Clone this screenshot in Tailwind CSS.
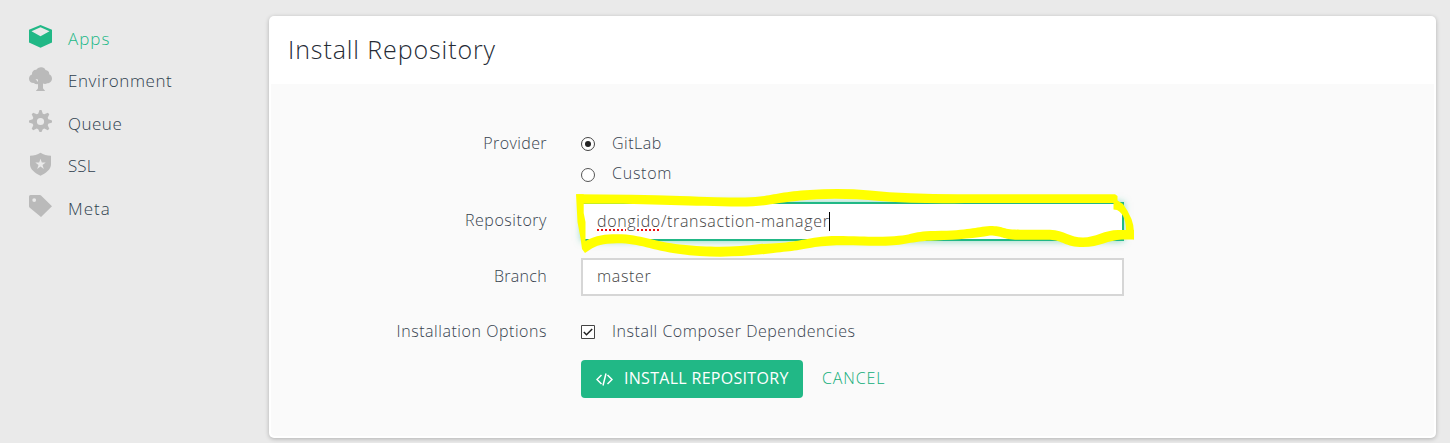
<!DOCTYPE html>
<html lang="en">
<head>
<meta charset="utf-8">
<title>Install Repository</title>
<script src="https://cdn.jsdelivr.net/npm/@tailwindcss/browser@4"></script>
</head>
<body class="h-[443px] overflow-hidden bg-[#eaeaea] font-['Open_Sans',sans-serif] font-light text-[#36424e]">
<div class="flex h-full">
  <nav class="flex w-[269px] shrink-0 flex-col pl-7 pt-[17.5px] text-[17px] text-[#2f3f4e]">
    <a class="flex h-[42.4px] items-center gap-4 text-[#21b886]">
      <svg class="mb-1 size-6" viewBox="0 0 24 24" fill="currentColor" fill-rule="evenodd"><path d="M12.500 0 24 4.700V17.500l-11.500 5.300L1 17.500V4.700zM12.500 2.300 3.500 6.300l9 5 9-5z"/></svg>
      <span class="tracking-[1px]">Apps</span>
    </a>
    <a class="flex h-[42.4px] items-center gap-4">
      <svg class="mb-1 size-6 text-[#bababa]" viewBox="0 0 24 24" fill="currentColor" fill-rule="evenodd"><path d="M12 .5c2.300-.8 4.700.2 5.500 2.400 2.500.2 4 2.100 3.700 4.300 1.800.9 2.800 2.500 2.800 4.300 0 2.900-2.200 4.800-4.800 4.800-1 .8-2.700.9-4.200.3v4.600c.6 1.300 1.800 1.500 2 2.800H8c.2-1.300 1.700-1.500 2-2.800v-4.100c-1.500.4-3.200.1-4-1-2.900.1-5-1.600-5-4.400C1 9.600 2.200 8 4 7.500c-.3-3 1.700-5 4.300-4.800C9 1.500 10.500.4 12 .5zM7.500 12l2.500 3v-2.500z"/></svg>
      <span class="tracking-[0.6px]">Environment</span>
    </a>
    <a class="flex h-[42.4px] items-center gap-4">
      <svg class="mb-1 size-6 text-[#bababa]" viewBox="0 0 24 24" fill="currentColor" fill-rule="evenodd"><path d="M11.500 1h2l1.300 3.700 1.500.6 3.500-1.600 1.500 1.500-1.600 3.500.6 1.500L24 11.500v2l-3.700 1.300-.6 1.500 1.600 3.400-1.500 1.500-3.500-1.600-1.500.6L13.500 23h-2l-1.300-2.800-1.500-.6-3.500 1.600-1.500-1.500 1.600-3.400-.6-1.500L1 13.500v-2l3.700-1.300.6-1.500-1.600-3.500 1.500-1.500 3.500 1.600 1.500-.6zM12.500 8.900a3.600 3.600 0 1 0 0 7.200 3.600 3.600 0 0 0 0-7.200z"/></svg>
      <span class="tracking-[0.5px]">Queue</span>
    </a>
    <a class="flex h-[42.4px] items-center gap-4">
      <svg class="mb-1 size-6 text-[#bababa]" viewBox="0 0 24 24" fill="currentColor" fill-rule="evenodd"><path d="M12.500.700C15.500 2.800 19 3.500 23 3.700v8.800c0 5.200-5.500 8.700-10.500 11.200C7.500 21.200 2 17.700 2 12.500V3.700C6 3.500 9.500 2.800 12.500.700zM12.500 6.700l-1.300 3.900H7.300l3.200 2.400-1.300 4 3.300-2.500 3.300 2.500-1.300-4 3.200-2.400h-3.900z"/></svg>
      <span class="tracking-[0.1px]">SSL</span>
    </a>
    <a class="flex h-[42.4px] items-center gap-4">
      <svg class="mb-1 size-6 text-[#bababa]" viewBox="0 0 24 24" fill="currentColor" fill-rule="evenodd"><path d="M2.500 1H12l1 .4L24 12.300 13 23 1.500 13.500 1 12.500v-10A1.500 1.500 0 0 1 2.500 1zM6.200 4.200a1.900 1.900 0 1 0 0 3.800 1.900 1.900 0 0 0 0-3.800z"/></svg>
      <span class="tracking-[1px]">Meta</span>
    </a>
  </nav>

  <main class="mt-4 h-[422px] w-[1167px] rounded-[5px] bg-white px-0.5 pb-0.5 shadow-[0_1px_4px_rgba(0,0,0,0.25)]">
    <h1 class="flex h-[68px] items-center px-[17px] text-[25px] tracking-[0.9px] text-[#252b35]">Install Repository</h1>
    <form class="relative h-[352px] rounded-b bg-[#fafafa] pt-[44px] text-[16px]">
      <div class="flex h-[30px] items-center">
        <span class="w-[276px] text-right tracking-[0.4px]">Provider</span>
        <span class="ml-[34px] mt-0.5 flex size-3.5 items-center justify-center rounded-full border-[1.500px] border-[#444] bg-white"><i class="size-1.5 rounded-full bg-[#222]"></i></span>
        <span class="ml-[17px] tracking-[0.5px]">GitLab</span>
      </div>
      <div class="flex h-[30px] items-center">
        <span class="ml-[310px] mt-[3px] size-3.5 rounded-full border-[1.500px] border-[#555] bg-white"></span>
        <span class="ml-[17px] tracking-[0.75px]">Custom</span>
      </div>
      <div class="mt-[14px] flex h-[39px] items-center">
        <span class="w-[276px] pb-[3px] text-right tracking-[0.55px]">Repository</span>
        <div class="ml-[34px] flex h-[39px] w-[543px] items-center border-2 border-[#21b886] bg-white pl-[14px] text-[#444] shadow-[0_0_7px_rgba(33,184,134,0.55)]">
          <span class="pb-px tracking-[0.67px]"><span class="underline decoration-[#e11] decoration-dotted decoration-2 underline-offset-2">dongido</span>/transaction-manager</span><i class="-ml-px h-[19px] w-px bg-black"></i>
        </div>
      </div>
      <div class="mt-[17px] flex h-[38px] items-center">
        <span class="w-[276px] pb-0.5 text-right tracking-[0.3px]">Branch</span>
        <div class="ml-[34px] flex h-[38px] w-[543px] items-center border-2 border-[#d6d6d6] bg-white pb-0.5 pl-[14px] tracking-[0.65px] text-[#444]">master</div>
      </div>
      <div class="mt-[20px] flex h-[30px] items-center">
        <span class="w-[276px] text-right tracking-[0.55px]">Installation Options</span>
        <svg class="ml-[34px] mt-0.5 size-3.5" viewBox="0 0 14 14" fill="none"><path d="M.5.500h13v13H.500z" fill="#fff" stroke="#444"/><path d="m2.800 7 2.700 2.700 5.700-5.700" stroke="#222" stroke-width="1.500"/></svg>
        <span class="ml-[17px] tracking-[0.53px]">Install Composer Dependencies</span>
      </div>
      <div class="mt-[14px] flex h-[38px] items-center pl-[310px]">
        <button class="flex h-[38px] w-[222px] items-center whitespace-nowrap rounded-[4px] bg-[#21b886] pl-[15px] font-normal text-white">
          <svg class="mr-[11px] h-4 w-[17px]" viewBox="0 0 17 16" fill="none" stroke="currentColor" stroke-width="1.500"><path d="M5.500 4 1 8.500 5.500 13M11.500 4 16 8.500 11.500 13M10 2.500 7 14.500"/></svg>
          <span class="pb-0.5 tracking-[0.3px]">INSTALL REPOSITORY</span>
        </button>
        <span class="ml-[19px] pb-0.5 tracking-[0.9px] text-[#10ad79]">CANCEL</span>
      </div>
      <svg class="absolute left-[299px] top-[96px] h-[90px] w-[574px]" viewBox="570 180 574 90" fill="#ff0" fill-rule="nonzero">
        <path d="M576 194.300Q635 194.300 680 196T745 197.500C770 197 775 192 810 190Q840 188 870 190.500 910 194.500 965 194.200H1115L1117.500 196V203H965Q920 204 880 201 835 197 800 200.500C775 203 765 206.500 740 206.500 690 206 650 203.500 583 203.700Z"/>
        <path d="M576 194.300H583.700V213L585.500 222V241C598 234 610 234 622 234.300 645 236 655 242 680 244.500 715 248 735 247 760 244 790 243 795 241 810 238.500 830 235 840 236 860 236.500 920 238 905 231 935 231 970 230.500 975 227 990 226 1005 226 1000 229.500 1020 229.700H1050C1065 230.500 1070 237.500 1083 237.500 1095 237.500 1105 230 1118 230H1134V239.500H1122C1108 240 1100 247 1083 247 1065 247 1062 240 1050 239.700H1020C1002 240 1003 235.500 990 235.500 975 238 960 239.500 935 240.500 910 241 905 246 880 245.800 850 245 830 244.500 815 247 795 251 790 251 765 254 735 257.500 705 257.500 680 254 650 250 640 243 617 243.200 602 243.500 597 245 589.500 250L585 253 582 249 580.500 238 577.500 222Z"/>
        <path d="M1113.500 200 1117.500 200.500 1123 204Q1134 219 1134 232V239.500L1126 235Q1127 215 1117 210L1113.500 209.500Z"/>
      </svg>
    </form>
  </main>
</div>
</body>
</html>
